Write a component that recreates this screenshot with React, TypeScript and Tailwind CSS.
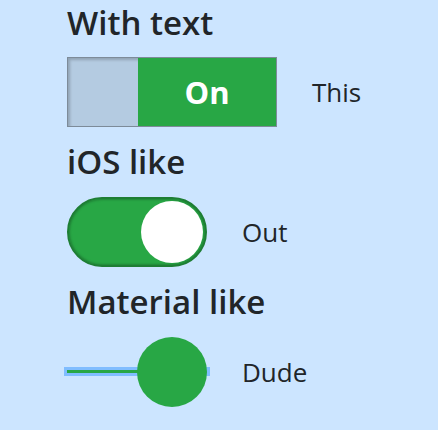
const font = { fontFamily: '"Open Sans", "Noto Sans", sans-serif' };

function TextSwitch() {
  return (
    <div className="flex h-[70px] w-[210px] border border-[#7d8b99] shadow-[inset_1px_1px_3px_rgba(0,0,0,0.35)]">
      <div className="w-[70px] bg-[#b4cbe1] shadow-[inset_2px_2px_3px_rgba(0,0,0,0.2)]" />
      <div className="flex flex-1 items-center justify-center bg-[#28a745] text-[31px] font-bold text-white">On</div>
    </div>
  );
}

function IosSwitch() {
  return (
    <div className="flex h-[70px] w-[140px] items-center justify-end rounded-full border-2 border-[#1e7e34] bg-[#28a745] pr-[2px] shadow-[inset_0_0_3px_rgba(0,0,0,0.4)]">
      <div className="h-[62px] w-[62px] rounded-full bg-white" />
    </div>
  );
}

function MaterialSwitch() {
  return (
    <div className="relative h-[70px] w-[140px]">
      <div className="absolute left-[-3px] right-[-3px] top-[30px] h-[9px] bg-[#80bdff]" />
      <div className="absolute left-0 top-[33px] h-[3px] w-[80px] bg-[#28a745]" />
      <div className="absolute right-0 top-0 h-[70px] w-[70px] rounded-full bg-[#28a745]" />
    </div>
  );
}

export default function App() {
  return (
    <div className="min-h-screen bg-[#cce5ff] pl-[67px] pt-[3px] text-[#212529]" style={font}>
      <h3 className="text-[33px] font-semibold leading-[40px]">With text</h3>
      <div className="mt-[14px] flex items-center gap-[35px]">
        <TextSwitch />
        <span className="text-[26px]">This</span>
      </div>
      <h3 className="mt-[15px] text-[33px] font-semibold leading-[40px]">iOS like</h3>
      <div className="mt-[15px] flex items-center gap-[35px]">
        <IosSwitch />
        <span className="text-[26px]">Out</span>
      </div>
      <h3 className="mt-[15px] text-[33px] font-semibold leading-[40px]">Material like</h3>
      <div className="mt-[15px] flex items-center gap-[35px]">
        <MaterialSwitch />
        <span className="text-[26px]">Dude</span>
      </div>
    </div>
  );
}
